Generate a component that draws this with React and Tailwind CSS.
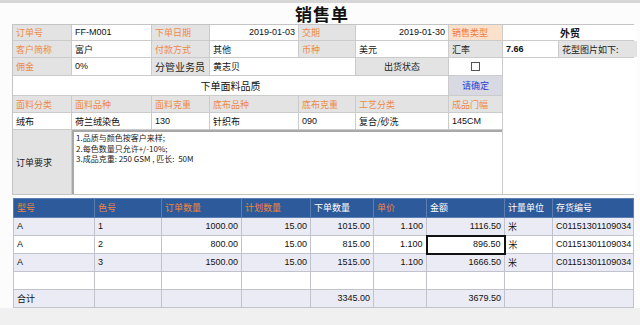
import React from 'react';

const cjk = { fontFamily: '"Noto Sans CJK SC", "Liberation Sans", sans-serif' };
const num = { fontFamily: '"Liberation Sans", "Noto Sans CJK SC", sans-serif' };

const Label = ({ children, tone = 'orange', className = '' }) => (
  <div
    className={`flex items-center px-[3px] bg-[#e3e3e3] text-[9px] leading-none ${
      tone === 'orange' ? 'text-[#ee8a4a]' : 'text-[#222]'
    } ${className}`}
  >
    {children}
  </div>
);

const Value = ({ children, className = '' }) => (
  <div className={`flex items-center px-[3px] bg-white text-[9px] leading-none text-[#111] ${className}`}>
    {children}
  </div>
);

const columns = [
  { key: 'model', title: '型号', w: 81, hot: true },
  { key: 'color', title: '色号', w: 67, hot: true },
  { key: 'order', title: '订单数量', w: 80, hot: true },
  { key: 'plan', title: '计划数量', w: 69, hot: true },
  { key: 'placed', title: '下单数量', w: 63 },
  { key: 'price', title: '单价', w: 53, hot: true },
  { key: 'amount', title: '金额', w: 78 },
  { key: 'unit', title: '计量单位', w: 48 },
  { key: 'code', title: '存货编号', w: 81 },
];

const rows = [
  { model: 'A', color: '1', order: '1000.00', plan: '15.00', placed: '1015.00', price: '1.100', amount: '1116.50', unit: '米', code: 'C01151301109034' },
  { model: 'A', color: '2', order: '800.00', plan: '15.00', placed: '815.00', price: '1.100', amount: '896.50', unit: '米', code: 'C01151301109034', selected: true },
  { model: 'A', color: '3', order: '1500.00', plan: '15.00', placed: '1515.00', price: '1.100', amount: '1666.50', unit: '米', code: 'C01151301109034' },
  {},
  { model: '合计', placed: '3345.00', amount: '3679.50' },
];

const rightCols = ['order', 'plan', 'placed', 'price', 'amount'];

export default function App() {
  return (
    <div className="w-[640px] h-[325px] overflow-hidden bg-[#fcfcfc] flex flex-col" style={cjk}>
      <div className="h-[3px] bg-[#d6d6d6]" />

      {/* title */}
      <div className="h-[21px] flex items-center justify-center">
        <span className="text-[17px] font-bold text-[#111] tracking-[1px] ml-[4px]">销售单</span>
      </div>

      {/* header form */}
      <div
        className="ml-[12px] w-[622px] grid gap-px bg-[#cbcbcb] border border-[#c4c4c4]"
        style={{
          gridTemplateColumns: '58px 79px 57px 88px 56px 92px 53px 55px 78px',
          gridTemplateRows: '15px 16px 17px 19px 16px 16px 64px',
        }}
      >
        <Label>订单号</Label>
        <Value><span style={num}>FF-M001</span></Value>
        <Label>下单日期</Label>
        <Value className="justify-end"><span style={num}>2019-01-03</span></Value>
        <Label>交期</Label>
        <Value className="justify-end"><span style={num}>2019-01-30</span></Value>
        <Label className="bg-[#fbe0cc] text-[#f07a3a]">销售类型</Label>
        <Value className="col-span-2 justify-center font-bold text-[10px]">外贸</Value>

        <Label>客户简称</Label>
        <Value>富户</Value>
        <Label>付款方式</Label>
        <Value>其他</Value>
        <Label>币种</Label>
        <Value>美元</Value>
        <Label tone="dark">汇率</Label>
        <Value className="font-bold"><span style={num}>7.66</span></Value>
        <Label tone="dark">花型图片如下:</Label>

        <Label>佣金</Label>
        <Value><span style={num}>0%</span></Value>
        <Label tone="dark" className="text-[10px]">分管业务员</Label>
        <Value className="col-span-2">黄志贝</Value>
        <Label tone="dark" className="justify-center">出货状态</Label>
        <Value className="justify-center">
          <span className="w-[9px] h-[9px] border border-[#555] bg-white" />
        </Value>
        <div className="col-span-2 row-span-5 bg-white" />

        <Value className="col-span-6 justify-center text-[10px]">下单面料品质</Value>
        <div className="flex items-center justify-center bg-[#d9d9e4] text-[9px] text-[#2b3ccf]">请确定</div>

        <Label>面料分类</Label>
        <Label>面料品种</Label>
        <Label>面料克重</Label>
        <Label>底布品种</Label>
        <Label>底布克重</Label>
        <Label>工艺分类</Label>
        <Label>成品门幅</Label>

        <Value>绒布</Value>
        <Value>荷兰绒染色</Value>
        <Value><span style={num}>130</span></Value>
        <Value>针织布</Value>
        <Value><span style={num}>090</span></Value>
        <Value>复合/砂洗</Value>
        <Value><span style={num}>145CM</span></Value>

        <Label tone="dark">订单要求</Label>
        <div className="col-span-6 bg-white border-t-2 border-l-2 border-[#a8a8a8] px-[2px] pt-[1px] flex flex-col text-[8px] text-[#222]">
          <div className="h-[10.5px] leading-[10px]">1.品质与颜色按客户来样;</div>
          <div className="h-[10.5px] leading-[10px]">2.每色数量只允许+/-10%;</div>
          <div className="h-[10.5px] leading-[10px]">3.成品克重: 250 GSM , 匹长:&nbsp;&nbsp;50M</div>
        </div>
      </div>

      {/* line table */}
      <div className="mt-[3px] ml-[13px] w-[621px]">
        <table className="table-fixed border-collapse w-[621px] text-[9px]">
          <colgroup>
            {columns.map((c) => (
              <col key={c.key} style={{ width: c.w }} />
            ))}
          </colgroup>
          <thead>
            <tr className="h-[19px] bg-[#2c5a9a]">
              {columns.map((c) => (
                <th
                  key={c.key}
                  className={`border border-[#5b7fb3] px-[3px] text-left font-normal ${
                    c.hot ? 'text-[#ef8440]' : 'text-white'
                  }`}
                >
                  {c.title}
                </th>
              ))}
            </tr>
          </thead>
          <tbody>
            {rows.map((r, i) => (
              <tr key={i} className={`h-[18px] ${i % 2 === 0 ? 'bg-[#ebebf5]' : 'bg-white'}`}>
                {columns.map((c) => {
                  const right = rightCols.includes(c.key);
                  const sel = r.selected && c.key === 'amount';
                  return (
                    <td
                      key={c.key}
                      className={`px-[3px] leading-none text-[#111] ${right ? 'text-right' : 'text-left'} ${
                        sel ? 'border-2 border-[#111] bg-white' : 'border border-[#c2c2cc]'
                      }`}
                      style={/[A-Za-z0-9]/.test(r[c.key] || '') ? num : cjk}
                    >
                      {r[c.key] || ''}
                    </td>
                  );
                })}
              </tr>
            ))}
          </tbody>
        </table>
      </div>
      <div className="flex-1 bg-[#f0f0f0]" />
    </div>
  );
}
